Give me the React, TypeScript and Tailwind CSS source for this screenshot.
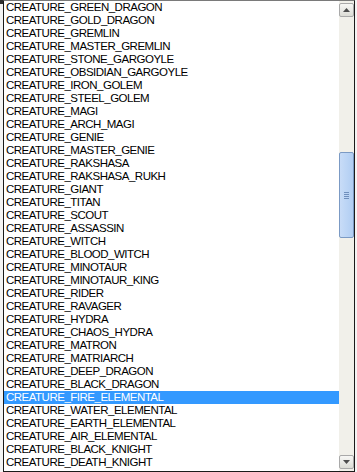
import React from 'react';

const creatures = [
  'GREEN_DRAGON',
  'GOLD_DRAGON',
  'GREMLIN',
  'MASTER_GREMLIN',
  'STONE_GARGOYLE',
  'OBSIDIAN_GARGOYLE',
  'IRON_GOLEM',
  'STEEL_GOLEM',
  'MAGI',
  'ARCH_MAGI',
  'GENIE',
  'MASTER_GENIE',
  'RAKSHASA',
  'RAKSHASA_RUKH',
  'GIANT',
  'TITAN',
  'SCOUT',
  'ASSASSIN',
  'WITCH',
  'BLOOD_WITCH',
  'MINOTAUR',
  'MINOTAUR_KING',
  'RIDER',
  'RAVAGER',
  'HYDRA',
  'CHAOS_HYDRA',
  'MATRON',
  'MATRIARCH',
  'DEEP_DRAGON',
  'BLACK_DRAGON',
  'FIRE_ELEMENTAL',
  'WATER_ELEMENTAL',
  'EARTH_ELEMENTAL',
  'AIR_ELEMENTAL',
  'BLACK_KNIGHT',
  'DEATH_KNIGHT',
];

const SELECTED = 'FIRE_ELEMENTAL';

function ArrowButton({ dir }: { dir: 'up' | 'down' }) {
  return (
    <div className="h-[14px] border border-[#a9a9a9] rounded-[2px] bg-gradient-to-b from-[#f7f7f5] to-[#dcdcd6] flex items-center justify-center">
      <svg width="7" height="4" viewBox="0 0 7 4">
        {dir === 'up' ? (
          <path d="M0 4 L3.5 0 L7 4 Z" fill="#4d4d4d" />
        ) : (
          <path d="M0 0 L7 0 L3.5 4 Z" fill="#4d4d4d" />
        )}
      </svg>
    </div>
  );
}

function Scrollbar() {
  return (
    <div className="w-[15px] flex flex-col bg-[#f1f0ea]">
      <div className="h-[2px]" />
      <ArrowButton dir="up" />
      <div className="h-[135px]" />
      {/* thumb */}
      <div className="h-[86px] border border-[#7b9ac4] rounded-[2px] bg-gradient-to-r from-[#c8dcf7] via-[#bcd5f5] to-[#b1cdf2] flex flex-col items-center justify-center gap-[1px]">
        <div className="w-[5px] h-[1px] bg-[#6f8fbd]" />
        <div className="w-[5px] h-[1px] bg-[#6f8fbd]" />
        <div className="w-[5px] h-[1px] bg-[#6f8fbd]" />
        <div className="w-[5px] h-[1px] bg-[#6f8fbd]" />
      </div>
      <div className="flex-1" />
      <ArrowButton dir="down" />
      <div className="h-[2px]" />
    </div>
  );
}

export default function App() {
  return (
    <div className="w-[357px] h-[472px] flex bg-[#f0f0f0] overflow-hidden">
      {/* left edge of the dialog */}
      <div className="w-[3px] flex flex-col">
        <div className="h-[4px] bg-[#303030]" />
        <div className="flex-1 bg-[#f4f4f4]" />
      </div>

      {/* list box */}
      <div className="flex-1 flex border-l border-r border-t border-b border-[#1a1a1a] border-t-[#7a7a7a] bg-white">
        <div className="flex-1 flex flex-col" style={{ fontFamily: '"Liberation Sans", Arial, sans-serif' }}>
          {creatures.map((name) => {
            const sel = name === SELECTED;
            return (
              <div
                key={name}
                className={
                  sel
                    ? 'h-[13px] leading-[13px] text-[11.5px] tracking-[-0.5px] pl-[2px] whitespace-nowrap bg-[#3399ff] text-white'
                    : 'h-[13px] leading-[13px] text-[11.5px] tracking-[-0.5px] pl-[2px] whitespace-nowrap text-black'
                }
              >
                CREATURE_{name}
              </div>
            );
          })}
        </div>
        <Scrollbar />
      </div>

      {/* right edge */}
      <div className="w-[2px] bg-[#f4f4f4]" />
    </div>
  );
}
